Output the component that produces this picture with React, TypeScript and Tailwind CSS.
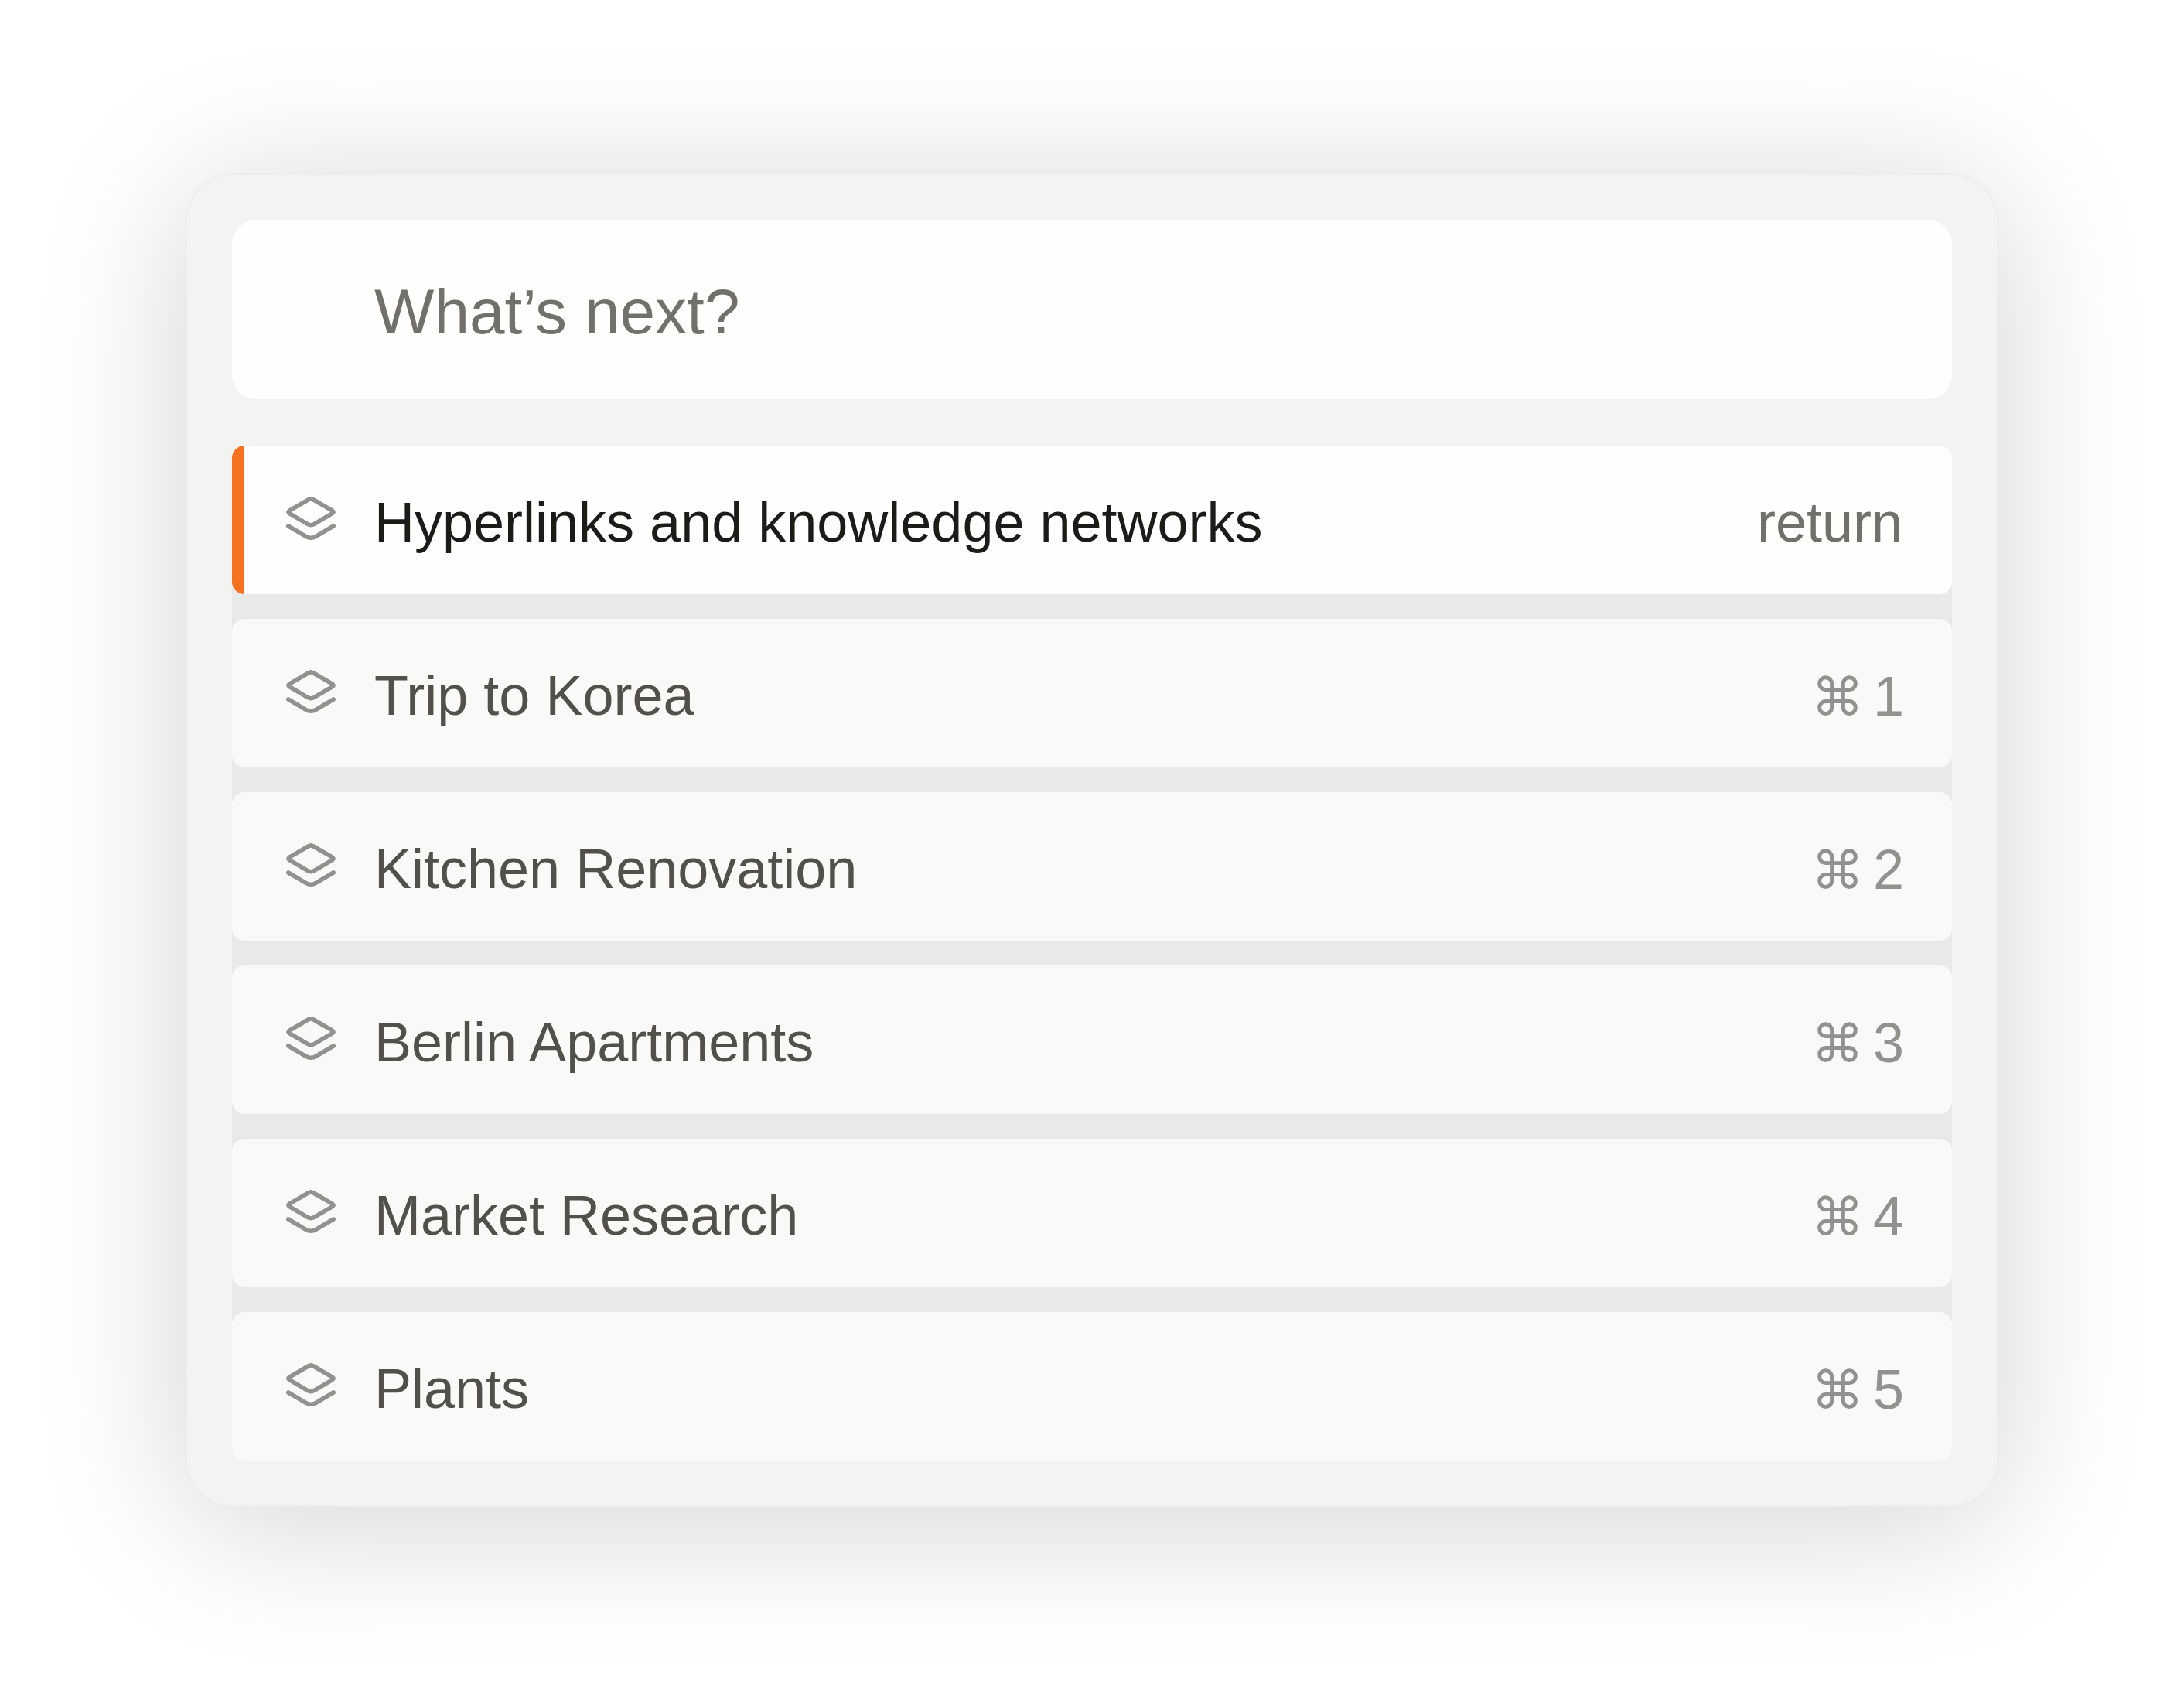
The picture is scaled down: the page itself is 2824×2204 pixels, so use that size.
import React from "react";

type Item = { title: string; keys: string; selected?: boolean };

const items: Item[] = [
  { title: "Hyperlinks and knowledge networks", keys: "return", selected: true },
  { title: "Trip to Korea", keys: "1" },
  { title: "Kitchen Renovation", keys: "2" },
  { title: "Berlin Apartments", keys: "3" },
  { title: "Market Research", keys: "4" },
  { title: "Plants", keys: "5" },
];

function StackIcon() {
  return (
    <svg
      className="mb-1 h-14 w-16 shrink-0 overflow-visible text-[#91928d]"
      viewBox="0 0 64 56"
      fill="none"
      stroke="currentColor"
      strokeWidth="5.6"
      strokeLinecap="round"
      strokeLinejoin="round"
      aria-hidden="true"
    >
      <path d="M28.6 4 Q32 1.8 35.4 4 L59.8 18.2 Q62.4 20 59.8 21.6 L36 35.6 Q32 37.8 28 35.6 L4.2 21.6 Q1.6 20 4.2 18.2 Z" />
      <path d="M2.8 38 L25.5 51.3 Q32 55.2 38.5 51.3 L61.2 38" />
    </svg>
  );
}

function Row({ title, keys, selected }: Item) {
  return (
    <li>
      <button
        type="button"
        className={
          selected
            ? "relative flex h-48 w-full items-center gap-[50px] overflow-hidden rounded-2xl bg-[#fefefc] pr-16 pl-[70px] text-left text-[#1b1b17]"
            : "relative flex h-48 w-full items-center gap-[50px] overflow-hidden rounded-2xl bg-[#f9f9f7] pr-[62px] pl-[70px] text-left text-[#51504a]"
        }
      >
        {selected && <span className="absolute inset-y-0 left-0 w-4 bg-[#f57120]" />}
        <StackIcon />
        <span className="grow pt-1.5 text-[72px] leading-[76px]">{title}</span>
        {selected ? (
          <kbd className="pt-1.5 font-[inherit] text-[72px] leading-[76px] text-[#71706b]">{keys}</kbd>
        ) : (
          <kbd className="flex items-baseline gap-3 pt-2 font-[inherit] text-[72px] leading-[76px] text-[#91928d]">
            <span className="font-['DejaVu_Sans',sans-serif] text-[68px] leading-none">⌘</span>
            <span>{keys}</span>
          </kbd>
        )}
      </button>
    </li>
  );
}

export default function App() {
  return (
    <main className="min-h-screen bg-white px-[242px] pt-[226px] pb-[258px] font-['Liberation_Sans',Arial,sans-serif]">
      <section className="rounded-[60px] bg-[#f3f3f1] p-[58px] shadow-[0_0_0_2px_#ededeb,0_20px_192px_rgba(0,0,0,0.18)]">
        <input
          type="text"
          aria-label="What’s next?"
          placeholder="What’s next?"
          className="block h-[232px] w-full rounded-4xl bg-[#fefefc] pt-1.5 pr-16 pl-[184px] text-[82px] text-[#1b1b17] outline-none placeholder:text-[#71706b] placeholder:opacity-100"
        />
        <ul className="mt-[60px] flex flex-col gap-8 rounded-2xl bg-[#e9e9e7]">
          {items.map((item) => (
            <Row key={item.title} {...item} />
          ))}
        </ul>
      </section>
    </main>
  );
}
